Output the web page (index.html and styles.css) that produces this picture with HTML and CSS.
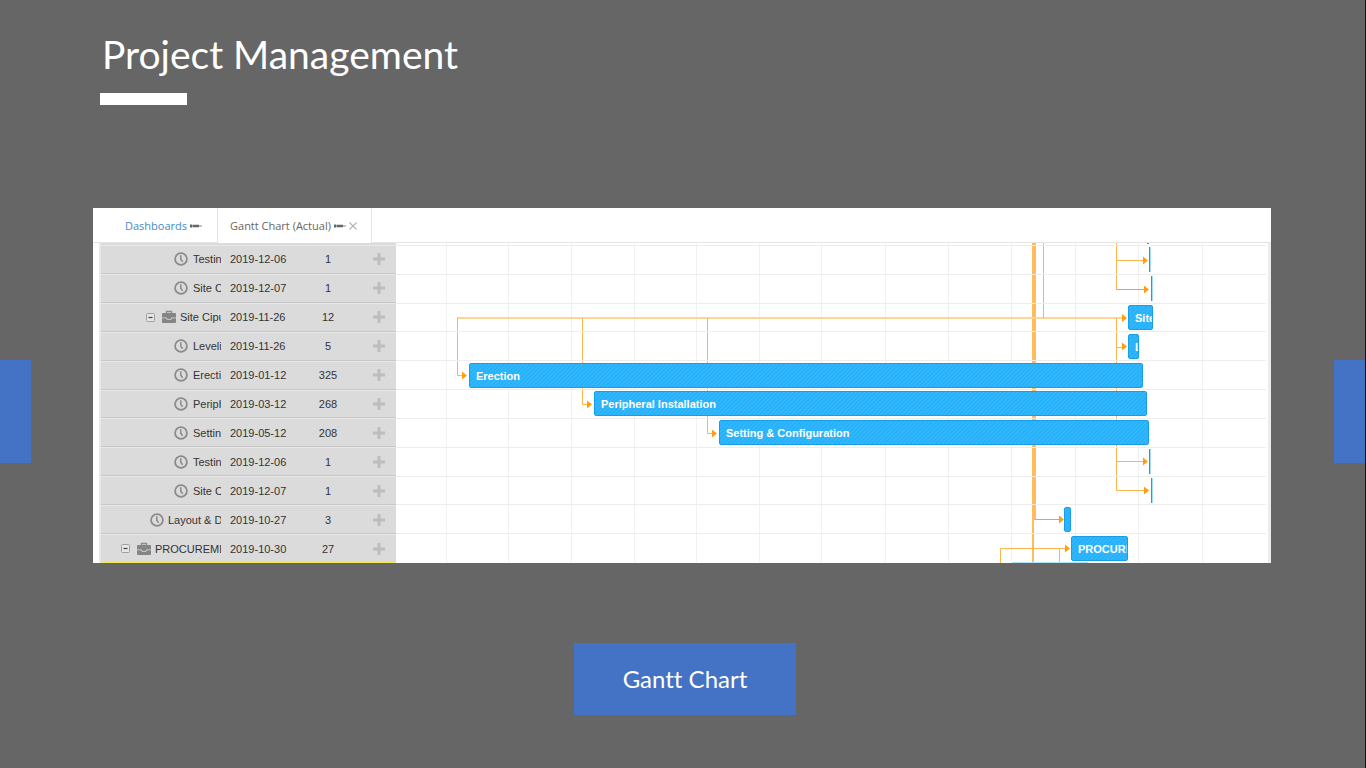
FILE: index.html
```html
<!DOCTYPE html>
<html lang="en">
	<head>
	<meta charset="utf-8">
	<title>Project Management</title>
	<link rel="stylesheet" href="styles.css">
	</head>
	<body>

		<!-- Shared icons -->
		<svg class="defs" aria-hidden="true">
			<symbol id="clock" viewBox="0 0 14 14">
				<circle cx="7" cy="7" r="5.9" fill="none" stroke="#8b8b8b" stroke-width="1.8"/>
				<path d="M6.800 3.200V7.200L8.600 9.800" fill="none" stroke="#8b8b8b" stroke-width="1.500"/>
			</symbol>
			<symbol id="case" viewBox="0 0 14 14">
				<path d="M4.500 4V1.500H9.500V4" fill="none" stroke="#8b8b8b" stroke-width="1.300"/>
				<path d="M1 3H13Q14 3 14 4V7.500H9.500L8.500 9H5.500L4.500 7.500H0V4Q0 3 1 3ZM0 8.200H4L5 9.800H9L10 8.200H14V12Q14 13 13 13H1Q0 13 0 12Z" fill="#858585"/>
			</symbol>
			<symbol id="minus" viewBox="0 0 9 9">
				<rect x="0.5" y="0.5" width="8" height="8" rx="1" fill="#e6e6e6" stroke="#a0a0a0"/>
				<path d="M2.500 4.500H6.500" stroke="#444" stroke-width="1.200"/>
			</symbol>
			<symbol id="plus" viewBox="0 0 12 12">
				<path d="M6 0V12M0 6H12" stroke="#bdbdbd" stroke-width="3"/>
			</symbol>
			<symbol id="pin" viewBox="0 0 12 6">
				<path d="M0 3H12" stroke="#888" stroke-width="1"/>
				<path d="M1 1.500V4.500M3 3H9" stroke="#666" stroke-width="2.600"/>
			</symbol>
		</svg>

		<header>
			<h1>Project Management</h1>
			<div class="rule"></div>
		</header>

		<main class="stage">
			<button class="side" aria-label="Previous slide"></button>

			<section class="panel">
				<nav class="tabs">
					<a class="tab" href="#dashboards">Dashboards <svg class="pin"><use href="#pin"/></svg></a>
					<div class="tab active">
						<a href="#gantt">Gantt Chart (Actual) <svg class="pin"><use href="#pin"/></svg></a>
						<button class="close" aria-label="Close tab"><svg viewBox="0 0 8 8"><path d="M0.500 0.500L7.500 7.500M7.500 0.500L0.500 7.500" stroke="#b5b5b5" stroke-width="1.200"/></svg></button>
					</div>
				</nav>

				<div class="gantt">
					<div class="list">
						<table>
							<colgroup><col class="c-name"><col class="c-date"><col class="c-days"><col class="c-add"></colgroup>
							<tbody>
								<tr><td><div class="name level3"><svg class="icon"><use href="#clock"/></svg>Testin</div></td><td>2019-12-06</td><td>1</td><td><button aria-label="Add"><svg><use href="#plus"/></svg></button></td></tr>
								<tr><td><div class="name level3"><svg class="icon"><use href="#clock"/></svg>Site C</div></td><td>2019-12-07</td><td>1</td><td><button aria-label="Add"><svg><use href="#plus"/></svg></button></td></tr>
								<tr><td><div class="name level2"><button class="fold" aria-label="Collapse"><svg><use href="#minus"/></svg></button><svg class="icon"><use href="#case"/></svg>Site Cipu</div></td><td>2019-11-26</td><td>12</td><td><button aria-label="Add"><svg><use href="#plus"/></svg></button></td></tr>
								<tr><td><div class="name level3"><svg class="icon"><use href="#clock"/></svg>Leveli</div></td><td>2019-11-26</td><td>5</td><td><button aria-label="Add"><svg><use href="#plus"/></svg></button></td></tr>
								<tr><td><div class="name level3"><svg class="icon"><use href="#clock"/></svg>Erecti</div></td><td>2019-01-12</td><td>325</td><td><button aria-label="Add"><svg><use href="#plus"/></svg></button></td></tr>
								<tr><td><div class="name level3"><svg class="icon"><use href="#clock"/></svg>Periph</div></td><td>2019-03-12</td><td>268</td><td><button aria-label="Add"><svg><use href="#plus"/></svg></button></td></tr>
								<tr><td><div class="name level3"><svg class="icon"><use href="#clock"/></svg>Settin</div></td><td>2019-05-12</td><td>208</td><td><button aria-label="Add"><svg><use href="#plus"/></svg></button></td></tr>
								<tr><td><div class="name level3"><svg class="icon"><use href="#clock"/></svg>Testin</div></td><td>2019-12-06</td><td>1</td><td><button aria-label="Add"><svg><use href="#plus"/></svg></button></td></tr>
								<tr><td><div class="name level3"><svg class="icon"><use href="#clock"/></svg>Site C</div></td><td>2019-12-07</td><td>1</td><td><button aria-label="Add"><svg><use href="#plus"/></svg></button></td></tr>
								<tr><td><div class="name level2"><svg class="icon"><use href="#clock"/></svg>Layout &amp; D</div></td><td>2019-10-27</td><td>3</td><td><button aria-label="Add"><svg><use href="#plus"/></svg></button></td></tr>
								<tr><td><div class="name level1"><button class="fold" aria-label="Collapse"><svg><use href="#minus"/></svg></button><svg class="icon"><use href="#case"/></svg>PROCUREME</div></td><td>2019-10-30</td><td>27</td><td><button aria-label="Add"><svg><use href="#plus"/></svg></button></td></tr>
							</tbody>
						</table>
					</div>

					<div class="chart">
						<!-- Months, then the dependency links -->
						<svg class="links" width="872" height="320" viewBox="0 0 872 320" fill="none" aria-hidden="true">
							<path stroke="#f1f1f1" d="M50.500 0V320M112.500 0V320M175.500 0V320M238.500 0V320M300.500 0V320M363.500 0V320M425.500 0V320M489.500 0V320M552.500 0V320M615.500 0V320M679.500 0V320M742.500 0V320M806.500 0V320"/>
							<path stroke="#ffbb5c" stroke-width="4" d="M638 0V277"/>
							<path stroke="#ffbb5c" stroke-width="2" d="M637 277V320"/>
							<path stroke="#ffd596" stroke-width="2" d="M61 75H727"/>
							<path stroke="#ffb54d" d="M647.500 0V75M61.500 75V132.500H67M186.500 75V161.500H192M311.500 75V190.500H317M720.500 0V46.500H749M720.500 17.500H747M720.500 75V247.500H749M720.500 104.500H726M720.500 218.500H747M604.500 320V305.500H670M663.500 305.500V320"/>
							<path stroke="#ffa21a" d="M639 276.500H664M720.500 46.500H749"/>
							<path fill="#ff9f10" d="M66 128.500L71 132.500L66 136.500ZM191 157.500L196 161.500L191 165.500ZM316 186.500L321 190.500L316 194.500ZM726 71L731 75L726 79ZM726 99.500L731 103.500L726 107.500ZM747 13.500L752 17.500L747 21.500ZM748 42.500L753 46.500L748 50.500ZM747 214.500L752 218.500L747 222.500ZM748 243.500L753 247.500L748 251.500ZM663 272.500L668 276.500L663 280.500ZM669 301.500L674 305.500L669 309.500Z"/>
							<path stroke="#b5e1f5" d="M616 319.500H692"/>
						</svg>
						<div class="rows">
							<div class="row"><div class="bar thin" style="margin-left:753px"></div></div>
							<div class="row"><div class="bar thin" style="margin-left:755px"></div></div>
							<div class="row"><div class="bar" style="margin-left:732px;width:25px">Site</div></div>
							<div class="row"><div class="bar" style="margin-left:732px;width:11px">L</div></div>
							<div class="row"><div class="bar" style="margin-left:73px;width:674px">Erection</div></div>
							<div class="row"><div class="bar" style="margin-left:198px;width:553px">Peripheral Installation</div></div>
							<div class="row"><div class="bar" style="margin-left:323px;width:430px">Setting &amp; Configuration</div></div>
							<div class="row"><div class="bar thin" style="margin-left:753px"></div></div>
							<div class="row"><div class="bar thin" style="margin-left:755px"></div></div>
							<div class="row"><div class="bar" style="margin-left:668px;width:7px"></div></div>
							<div class="row"><div class="bar" style="margin-left:675px;width:57px">PROCURE</div></div>
						</div>
						<svg class="links" width="872" height="2" viewBox="0 0 872 2" aria-hidden="true"><rect x="751" width="2" height="1" fill="#1b9fe3"/></svg>
					</div>
				</div>
			</section>

			<button class="side" aria-label="Next slide"></button>
		</main>

		<footer>
			<button class="caption">Gantt Chart</button>
		</footer>

	</body>
</html>
```
FILE: styles.css
```css
* { box-sizing: border-box; }
body { margin: 0; min-height: 100vh; background: #666; border-right: 1px solid #111; font-family: "Liberation Sans", Arial, sans-serif; font-size: 11px; color: #333; }
button { border: 0; padding: 0; background: none; font: inherit; cursor: pointer; }
a { text-decoration: none; color: inherit; }
svg { display: block; }
.defs { position: absolute; width: 0; height: 0; }

/* Heading */
header { padding: 29px 100px 0; height: 208px; }
h1 { margin: 0 0 14px 2px; font: 400 39px/50px Lato, "Open Sans", sans-serif; color: #fff; }
.rule { width: 87px; height: 12px; background: #fff; }

/* Slide body with the two side buttons */
.stage { display: grid; grid-template-columns: 31px 1fr 31px; column-gap: 62px; align-items: start; }
.side { height: 103px; margin-top: 152px; background: #4472c4; }
.panel { min-width: 0; margin-right: 1px; background: #fff; }

.tabs { display: flex; height: 35px; padding-left: 20px; border-bottom: 1px solid #e4e4e4; font: 11px/36px "Open Sans", sans-serif; }
.tab { display: flex; height: 35px; align-items: center; padding: 0 15px 0 12px; color: #428bca; }
.tab.active { gap: 3px; padding: 0 14px 0 12px; border: solid #e4e4e4; border-width: 0 1px; background: #fff; color: #666; }
.tab, .tab a { gap: 3px; }
.tab a { display: flex; align-items: center; }
.pin { width: 12px; height: 6px; }
.close svg { width: 8px; height: 8px; }

.gantt { display: flex; height: 320px; overflow: hidden; }

/* Task list */
.list { flex: 0 0 297px; margin-left: 6px; padding-top: 2px; background: #dbdbdb; border-left: 2px solid #e8e8e8; }
table { width: 100%; height: 318px; table-layout: fixed; border-collapse: separate; border-spacing: 0; }
td { padding: 0; text-align: center; border-top: 1px solid #e9e9e9; border-bottom: 1px solid #c6c6c6; }
tr:last-child td { border-bottom-color: #f5e84e; }
.c-name { width: 120px; }
.c-date { width: 74px; }
.c-days { width: 66px; }
td:nth-child(2) { text-align: left; padding-left: 9px; }
td button { display: block; margin: 0 auto; }
td button svg { width: 12px; height: 12px; }
.name { display: flex; align-items: center; gap: 5px; overflow: hidden; white-space: nowrap; line-height: 16px; }
.level1 { padding-left: 20px; }
.level2 { padding-left: 49px; }
.level3 { padding-left: 73px; }
.level2:has(.fold) { padding-left: 45px; }
.level1, .level2 { gap: 4px; }
.icon { flex: none; width: 14px; height: 14px; }
.fold { flex: none; margin: 0 3px 0 0; }
.fold svg { width: 9px; height: 9px; }

/* Timeline */
.chart { position: relative; flex: 1; min-width: 0; overflow: hidden; border-right: 3px solid #ececec; }
.links { position: absolute; top: 0; left: 0; }
.rows { position: relative; display: grid; grid-template-rows: repeat(11, 1fr); height: 319px; padding-top: 2px; margin-right: 2px; }
.row { display: flex; align-items: center; border-top: 1px solid #ededed; }
.bar { flex: none; height: 25px; padding-left: 6px; overflow: hidden; border: 1px solid #149fe6; border-radius: 2px; background: repeating-linear-gradient(135deg, #24b0fa 0 1px, #3cbafb 2px, #24b0fa 3px); color: #fff; font-weight: bold; line-height: 24px; white-space: nowrap; }
.bar:empty { padding: 0; }
.thin { width: 2px; border-width: 0 1px 0 0; border-color: #a5dcf6; border-radius: 0; background: #1b9fe3; }

footer { display: flex; justify-content: center; padding: 80px 0 53px 5px; }
.caption { width: 222px; height: 72px; background: #4472c4; color: #fff; font: 24px/72px Lato, "Open Sans", sans-serif; font-variant-ligatures: none; }
```
